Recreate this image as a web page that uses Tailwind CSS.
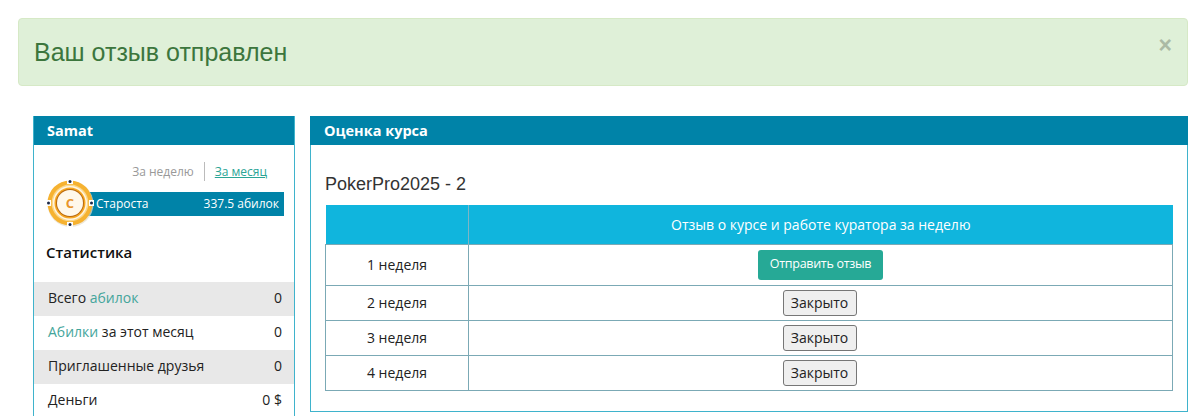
<!DOCTYPE html>
<html lang="en">
<head>
    <meta charset="UTF-8">
    <meta name="viewport" content="width=device-width, initial-scale=1.0">
    <script src="https://cdn.jsdelivr.net/npm/@tailwindcss/browser@4"></script>
    <title>Оценка курса</title>
</head>
<body class="bg-white h-[416px] overflow-hidden font-['Open_Sans',sans-serif] text-[14px] text-[#222]">

    <!-- alert -->
    <div class="mt-[18px] ml-[18px] w-[1170px] h-[68px] bg-[#dff0d8] border border-[#d6e9c6] rounded flex justify-between pl-[15px] pr-[15px]">
        <h2 class="font-['Liberation_Sans',sans-serif] text-[25px] leading-[66px] text-[#3c763d]">Ваш отзыв отправлен</h2>
        <span class="font-['Liberation_Sans',sans-serif] font-bold text-[23px] leading-[52px] text-[#abbaa5]">×</span>
    </div>

    <div class="flex gap-[15px] mt-[30px] ml-[33px] items-start">
        <!-- sidebar, runs on below the window -->
        <div class="w-[262px] h-[300px] overflow-hidden border-x border-[#3fb3cc] shrink-0">
            <div class="-mx-px w-[262px] h-[29px] bg-[#0083a8] text-white font-bold text-[14.5px] leading-[29px] pl-[14px]">Samat</div>
            <div class="flex justify-end items-center mt-[17px] pr-[27px] text-[12px] h-[19px]">
                <span class="text-[#999] pr-[10px] border-r border-[#bbb] leading-[19px]">За неделю</span>
                <a class="text-[#2aa596] underline pl-[10px] leading-[19px]">За месяц</a>
            </div>
            <div class="relative mt-[11px] ml-[36px] w-[214px] h-[24px] bg-[#0083a8] text-white text-[12px] leading-[23px] flex justify-between pl-[26px] pr-[5px]">
                <span>Староста</span><span>337.5 абилок</span>
                <svg class="absolute left-[-24px] top-[-13px]" width="48" height="48" viewBox="0 0 48 48">
                    <circle cx="24.5" cy="25" r="23" fill="#e6dcc6" opacity="0.7"/>
                    <circle cx="24" cy="24" r="22.5" fill="#f6b230"/>
                    <circle cx="24" cy="24" r="18.5" fill="#fbd88c"/>
                    <circle cx="24" cy="24" r="17" fill="#fff6e4"/>
                    <circle cx="24" cy="24" r="15.5" fill="#f7a823"/>
                    <circle cx="24" cy="24" r="14" fill="#b9690f"/>
                    <circle cx="24" cy="24" r="13" fill="#fff8ea"/>
                    <rect x="21" y="0" width="6" height="5" fill="#fff"/>
                    <rect x="21" y="43" width="6" height="5" fill="#fff"/>
                    <rect x="0" y="21" width="5" height="6" fill="#fff"/>
                    <rect x="43" y="21" width="5" height="6" fill="#fff"/>
                    <circle cx="24" cy="2.5" r="1.5" fill="#1c2a4a"/>
                    <circle cx="24" cy="45.5" r="1.5" fill="#1c2a4a"/>
                    <circle cx="2.5" cy="24" r="1.5" fill="#1c2a4a"/>
                    <circle cx="45.5" cy="24" r="1.5" fill="#1c2a4a"/>
                    <text x="24" y="28.5" text-anchor="middle" font-family="Open Sans" font-weight="700" font-size="13" fill="#e8952a">C</text>
                </svg>
            </div>
            <h3 class="font-semibold text-[15px] text-[#111] leading-5 mt-[26px] ml-[12px]">Статистика</h3>
            <div class="mt-[20px] text-[14px]">
                <div class="flex justify-between h-[34px] leading-[32px] bg-[#e8e8e8] pl-[14px] pr-[12px]"><span>Всего <a class="text-[#44a59b]">абилок</a></span><span>0</span></div>
                <div class="flex justify-between h-[34px] leading-[32px] pl-[14px] pr-[12px]"><span><a class="text-[#44a59b]">Абилки</a> за этот месяц</span><span>0</span></div>
                <div class="flex justify-between h-[34px] leading-[32px] bg-[#e8e8e8] pl-[14px] pr-[12px]"><span>Приглашенные друзья</span><span>0</span></div>
                <div class="flex justify-between h-[33px] leading-[32px] pl-[14px] pr-[12px]"><span>Деньги</span><span>0 $</span></div>
            </div>
        </div>

        <!-- main panel -->
        <div class="w-[878px] h-[296px] border border-[#3fb3cc] border-t-0 shrink-0">
            <div class="-mx-px w-[878px] h-[29px] bg-[#0083a8] text-white font-bold text-[14.5px] leading-[29px] pl-[14px]">Оценка курса</div>
            <div class="px-[14px]">
                <h3 class="font-['Liberation_Sans',sans-serif] text-[18px] leading-5 text-[#333] mt-[29px] mb-[11px]">PokerPro2025 - 2</h3>
                <table class="w-[848px] border-collapse table-fixed text-[14px] text-center">
                    <thead>
                        <tr class="h-[39px] bg-[#10b5dd] text-white">
                            <th class="w-[143px] font-normal border-r border-[#7fb5c5]"></th>
                            <th class="font-normal">Отзыв о курсе и работе куратора за неделю</th>
                        </tr>
                    </thead>
                    <tbody>
                        <tr class="h-[41px]">
                            <td class="border border-[#7ba9b5]">1 неделя</td>
                            <td class="border border-[#7ba9b5]"><button class="h-[30px] w-[125px] bg-[#26a996] text-white text-[12.5px] tracking-[-0.3px] rounded-[3px] align-middle">Отправить отзыв</button></td>
                        </tr>
                        <tr class="h-[35px]">
                            <td class="border border-[#7ba9b5]">2 неделя</td>
                            <td class="border border-[#7ba9b5]"><button class="h-[26px] w-[74px] mr-[2px] bg-[#efefef] border border-[#767676] rounded-[3px] align-middle">Закрыто</button></td>
                        </tr>
                        <tr class="h-[35px]">
                            <td class="border border-[#7ba9b5]">3 неделя</td>
                            <td class="border border-[#7ba9b5]"><button class="h-[26px] w-[74px] mr-[2px] bg-[#efefef] border border-[#767676] rounded-[3px] align-middle">Закрыто</button></td>
                        </tr>
                        <tr class="h-[35px]">
                            <td class="border border-[#7ba9b5]">4 неделя</td>
                            <td class="border border-[#7ba9b5]"><button class="h-[26px] w-[74px] mr-[2px] bg-[#efefef] border border-[#767676] rounded-[3px] align-middle">Закрыто</button></td>
                        </tr>
                    </tbody>
                </table>
            </div>
        </div>
    </div>

</body>
</html>
